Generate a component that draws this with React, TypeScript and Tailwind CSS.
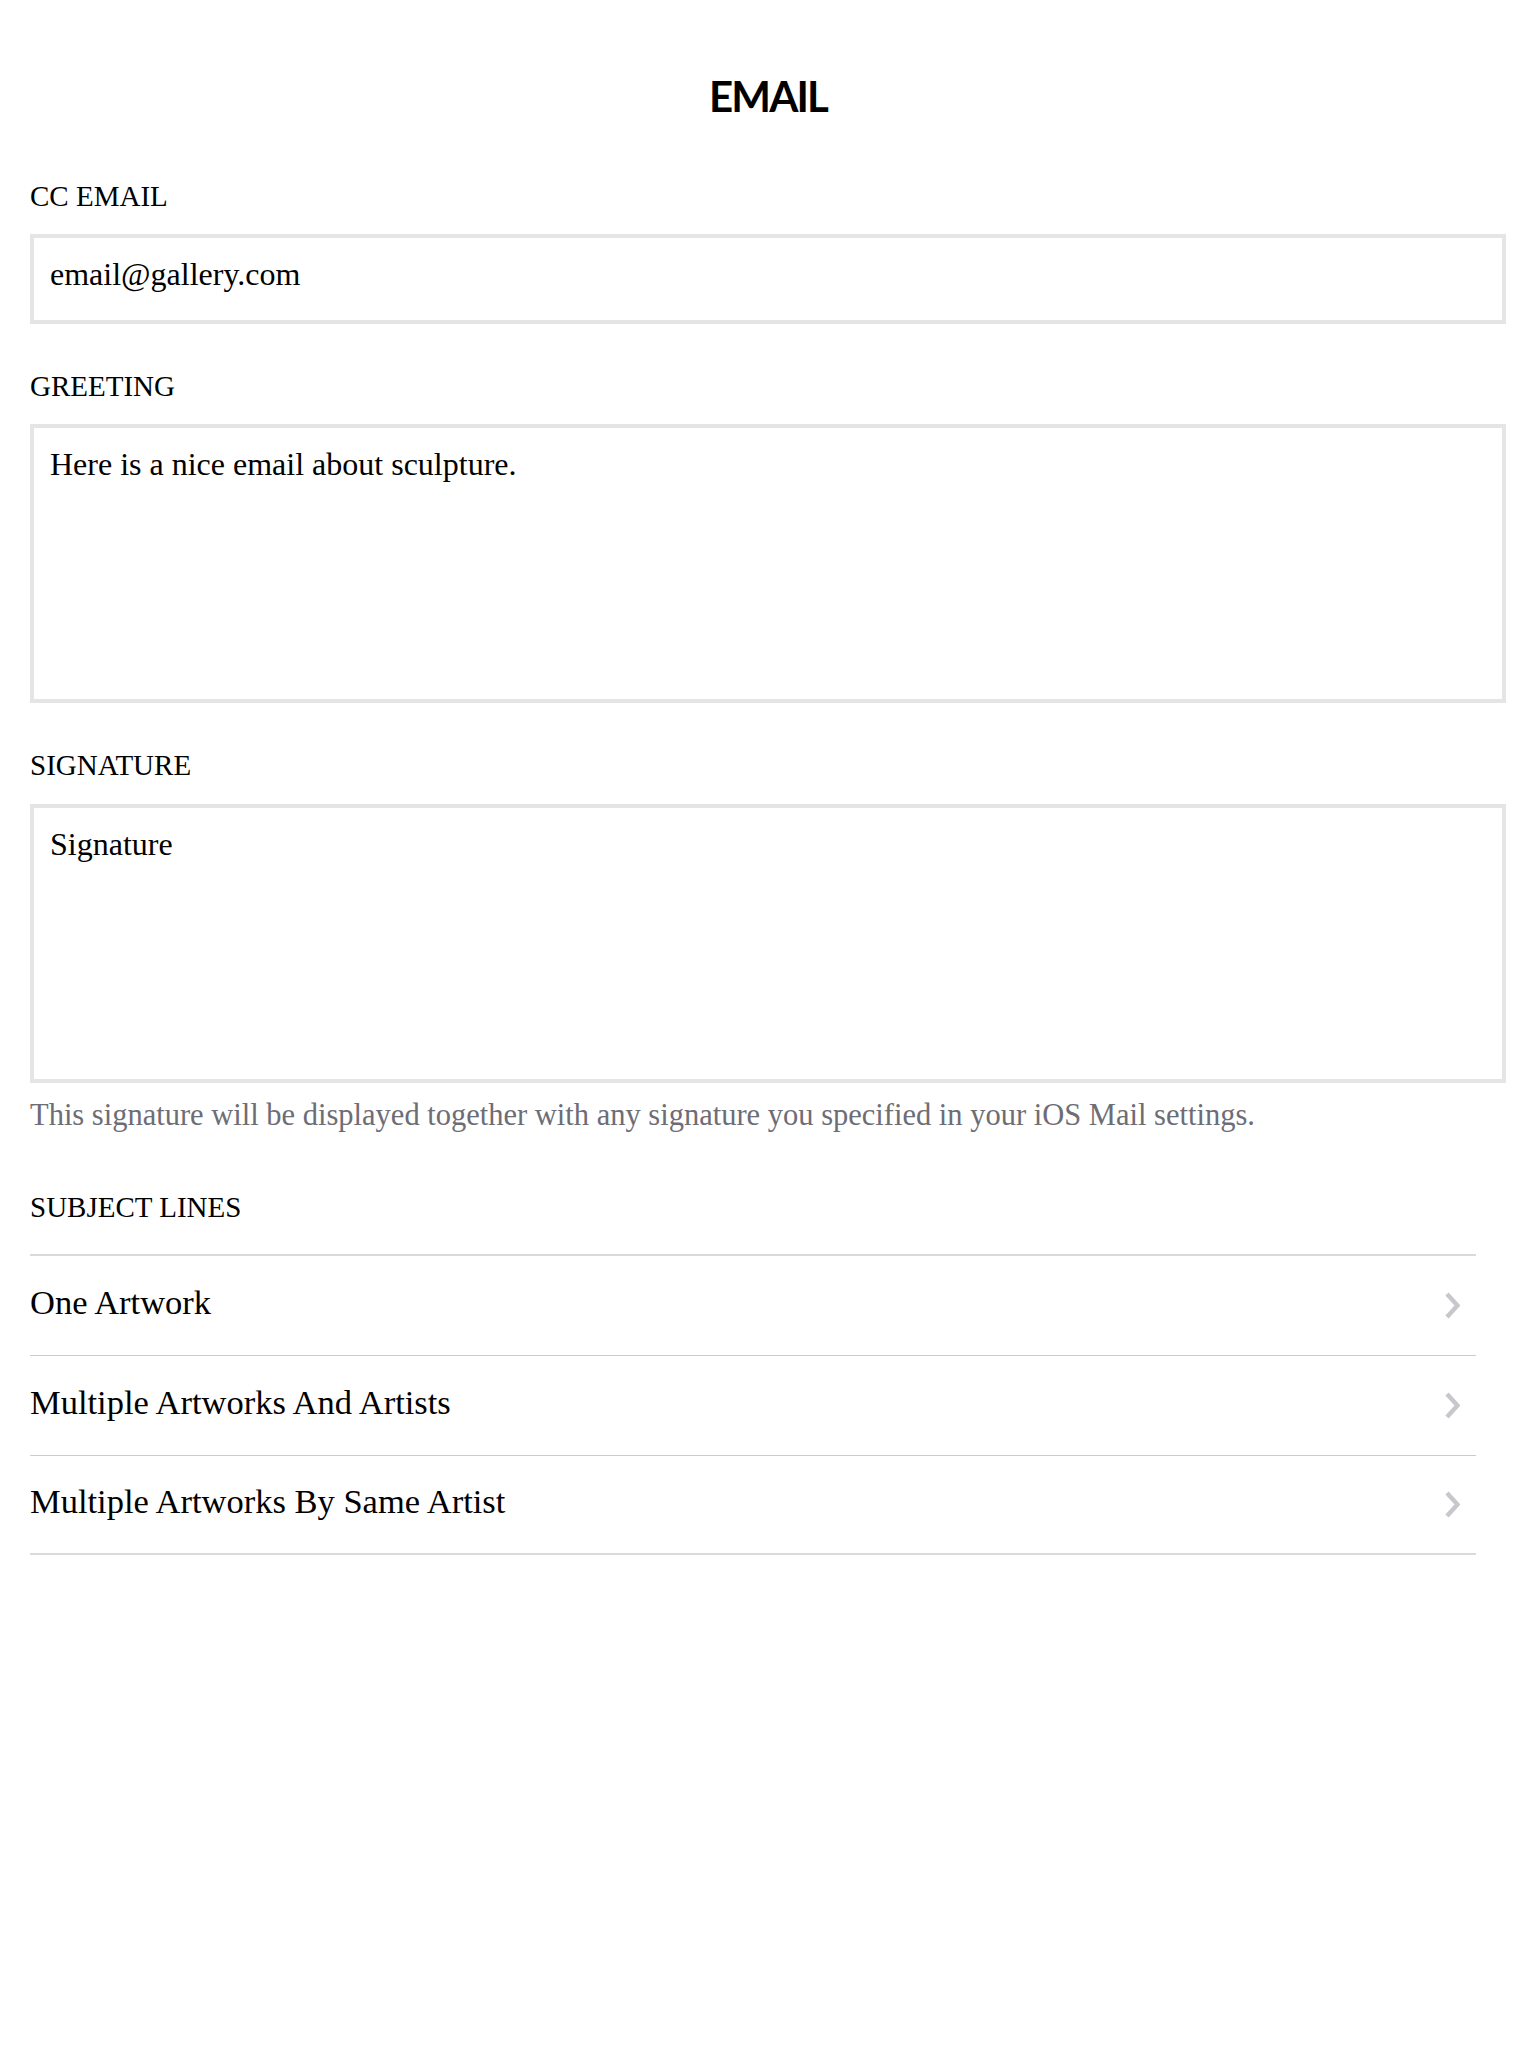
import { useState } from 'react';

const subjectLines = ['One Artwork', 'Multiple Artworks And Artists', 'Multiple Artworks By Same Artist'];

function FieldLabel({ children, className = '' }: { children: string; className?: string }) {
  return <div className={`text-[29px] leading-none text-black ${className}`}>{children}</div>;
}

function Chevron() {
  return (
    <svg width="15" height="27" viewBox="0 0 15 27" fill="none" aria-hidden>
      <polyline points="2,2 12.5,13.5 2,25" stroke="#c8c8cc" strokeWidth="4.5" strokeLinejoin="miter" />
    </svg>
  );
}

export default function App() {
  const [cc, setCc] = useState('email@gallery.com');
  const [greeting, setGreeting] = useState('Here is a nice email about sculpture.');
  const [signature, setSignature] = useState('Signature');

  return (
    <div className="min-h-screen bg-white px-[30px] pt-[75px] font-['Liberation_Serif',serif] text-black">
      <h1 className="text-center font-['Lato',sans-serif] text-[42px] font-bold leading-none tracking-[-0.045em]">
        EMAIL
      </h1>

      <FieldLabel className="mt-[65px]">CC EMAIL</FieldLabel>
      <input
        value={cc}
        onChange={(e) => setCc(e.target.value)}
        className="mt-[23px] block h-[90px] w-full border-4 border-[#e5e5e5] px-4 pb-[10px] text-[32px] leading-none outline-none"
      />

      <FieldLabel className="mt-[48px]">GREETING</FieldLabel>
      <textarea
        value={greeting}
        onChange={(e) => setGreeting(e.target.value)}
        className="mt-[23px] block h-[279px] w-full resize-none border-4 border-[#e5e5e5] px-4 pt-[17px] text-[32px] leading-[1.2] outline-none"
      />

      <FieldLabel className="mt-[48px]">SIGNATURE</FieldLabel>
      <textarea
        value={signature}
        onChange={(e) => setSignature(e.target.value)}
        className="mt-[24px] block h-[279px] w-full resize-none border-4 border-[#e5e5e5] px-4 pt-[17px] text-[32px] leading-[1.2] outline-none"
      />
      <p className="mt-[17px] text-[30.5px] leading-none text-[#6d6d76]">
        This signature will be displayed together with any signature you specified in your iOS Mail settings.
      </p>

      <FieldLabel className="mt-[62px]">SUBJECT LINES</FieldLabel>
      <ul className="mr-[30px] mt-[32px] border-t-2 border-[#dadada]">
        {subjectLines.map((line, i) => (
          <li
            key={line}
            className={`flex items-center justify-between pr-4 ${
              i === subjectLines.length - 1 ? 'h-[99px] border-b-2 border-[#dadada]' : 'h-[100px] border-b border-[#cccccc]'
            }`}
          >
            <span className="pb-[5px] text-[34.5px] leading-none">{line}</span>
            <Chevron />
          </li>
        ))}
      </ul>
    </div>
  );
}
